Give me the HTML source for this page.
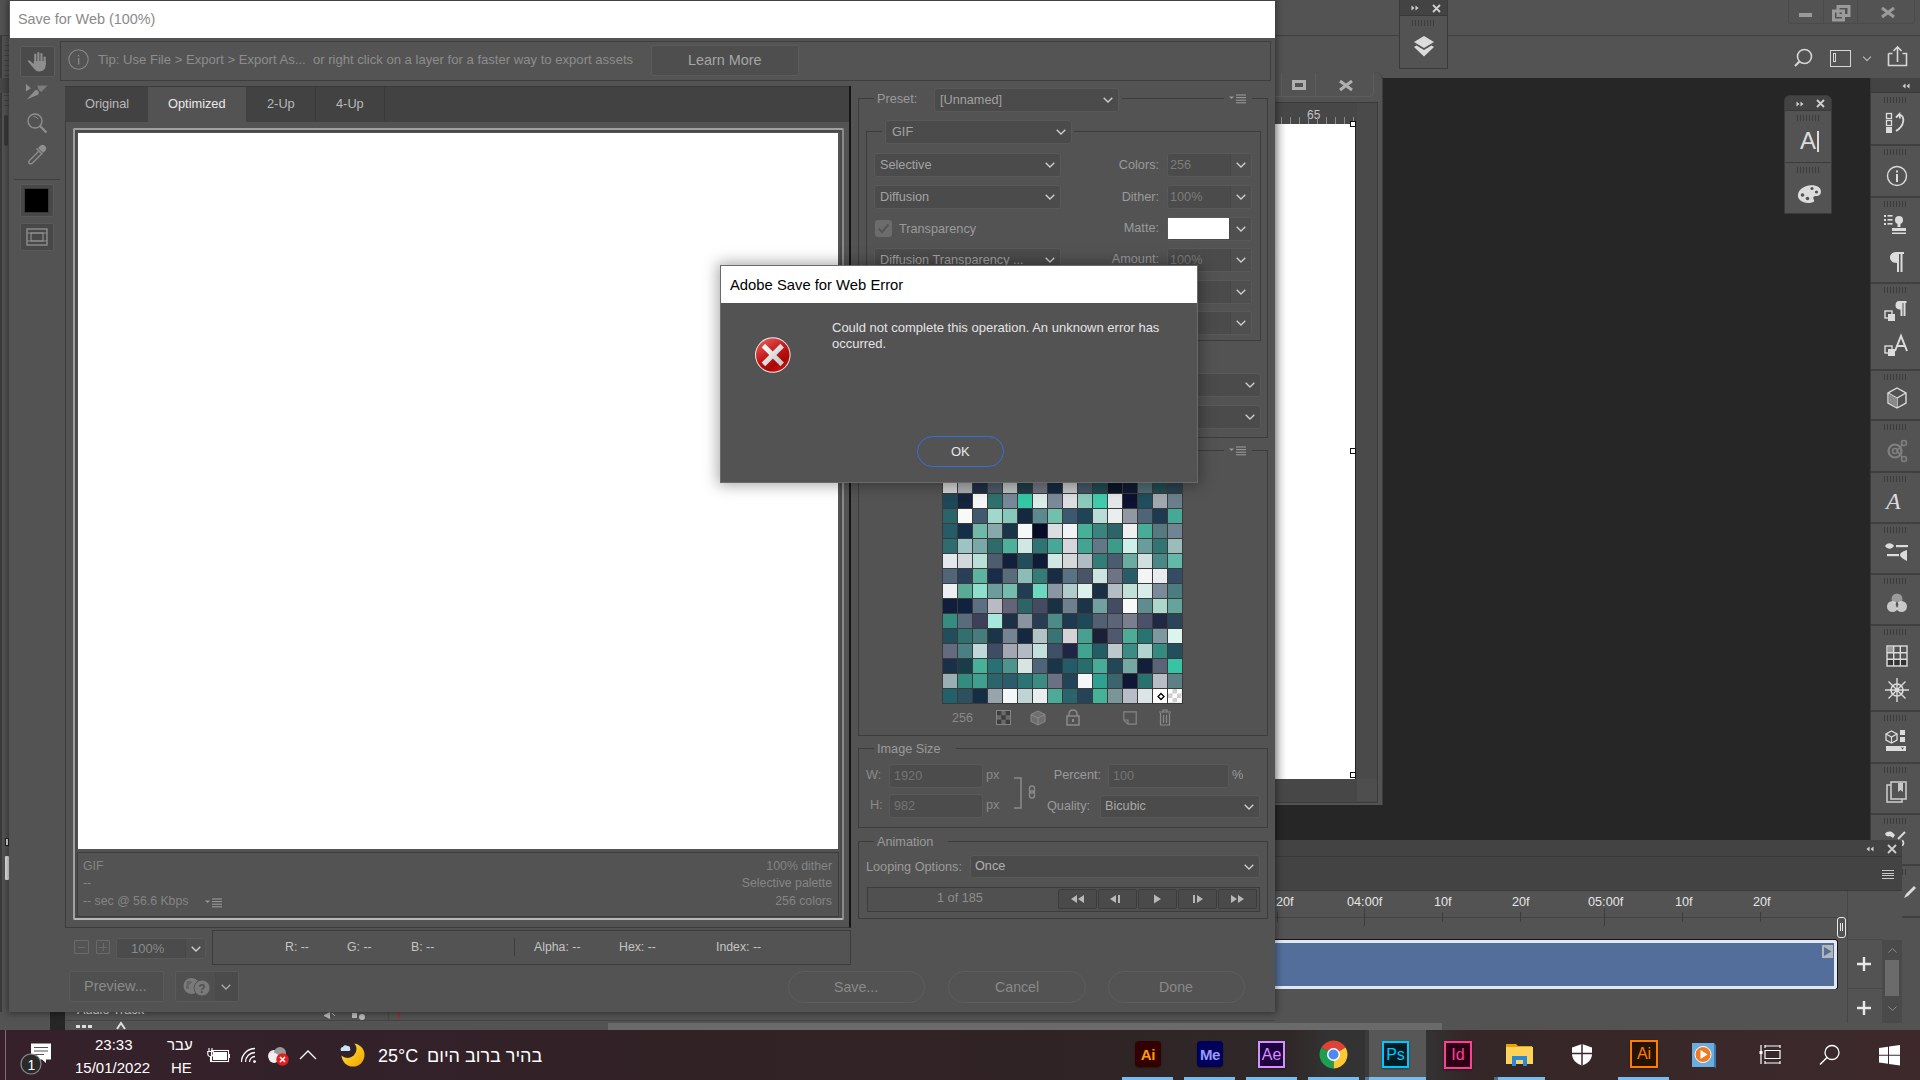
<!DOCTYPE html>
<html><head><meta charset="utf-8">
<style>
*{box-sizing:border-box;margin:0;padding:0}
html,body{width:1920px;height:1080px;overflow:hidden;background:#262626;font-family:"Liberation Sans",sans-serif;}
.a{position:absolute}
.t{position:absolute;white-space:nowrap;line-height:1}
.dd{position:absolute;background:#4b4b4b;border:1px solid #595959;border-radius:3px}
.chev{position:absolute;width:7px;height:7px;border-right:1.4px solid #cfcfcf;border-bottom:1.4px solid #cfcfcf;transform:rotate(45deg)}
.grip{position:absolute;height:6px;background:repeating-linear-gradient(90deg,#3c3c3c 0 1px,transparent 1px 3px)}
svg{position:absolute;overflow:visible}
</style></head>
<body>
<!-- ================= PHOTOSHOP BACKGROUND ================= -->
<div id="ps">
  <!-- top menu bar -->
  <div class="a" style="left:0;top:0;width:1920px;height:35px;background:#535353"></div>
  <div class="a" style="left:0;top:35px;width:1920px;height:1px;background:#3f3f3f"></div>
  <!-- options bar -->
  <div class="a" style="left:0;top:36px;width:1920px;height:42px;background:#535353"></div>
  <!-- window controls -->
  <div class="a" style="left:1788px;top:-3px;width:127px;height:27px;border:1px solid #4a4a4a;border-radius:3px"></div>
  <div class="a" style="left:1823px;top:0;width:1px;height:23px;background:#4a4a4a"></div>
  <div class="a" style="left:1857px;top:0;width:1px;height:23px;background:#4a4a4a"></div>
  <div class="a" style="left:1799px;top:13px;width:13px;height:4px;background:#9a9a9a"></div>
  <svg style="left:1832px;top:5px" width="19" height="16"><path d="M6 1.5h11v9h-11z M1.5 6h10v9h-10z" fill="none" stroke="#9a9a9a" stroke-width="3"/></svg>
  <svg style="left:1881px;top:7px" width="14" height="11"><path d="M1 1L13 10M13 1L1 10" stroke="#9a9a9a" stroke-width="3"/></svg>
  <!-- options bar icons -->
  <svg style="left:1794px;top:47px" width="22" height="22"><circle cx="10.5" cy="9.5" r="7" fill="none" stroke="#d6d6d6" stroke-width="1.6"/><path d="M5.5 14.5L1 19" stroke="#d6d6d6" stroke-width="2.2"/></svg>
  <div class="a" style="left:1830px;top:50px;width:21px;height:17px;border:1.6px solid #d6d6d6"></div>
  <div class="a" style="left:1833px;top:53px;width:3px;height:9px;border:1px solid #d6d6d6"></div>
  <div class="chev" style="left:1864px;top:54px;width:6px;height:6px;border-color:#c0c0c0;border-width:0 1px 1px 0"></div>
  <svg style="left:1887px;top:45px" width="22" height="22"><path d="M1.5 8.5v12h18v-12h-4 M5.5 8.5h-4" fill="none" stroke="#d6d6d6" stroke-width="1.6"/><path d="M10.5 17V2M6.5 6l4-4 4 4" fill="none" stroke="#d6d6d6" stroke-width="1.6"/></svg>
  <!-- left strip behind dialog -->
  <div class="a" style="left:0;top:36px;width:9px;height:994px;background:#535353"></div>
  <div class="a" style="left:0;top:36px;width:2px;height:994px;background:#3a3a3a"></div>
  <div class="a" style="left:4px;top:45px;width:5px;height:62px;background:repeating-linear-gradient(180deg,#444 0 1px,transparent 1px 5px)"></div>
  <div class="a" style="left:0;top:78px;width:9px;height:15px;background:#474747"></div>
  <div class="a" style="left:4px;top:115px;width:4px;height:31px;background:#3a3a3a;border-radius:2px"></div>
  <div class="a" style="left:5px;top:838px;width:4px;height:8px;border:1px solid #222;background:#ddd"></div>
  <div class="a" style="left:5px;top:856px;width:4px;height:24px;background:#e8e8e8;border-radius:1px"></div>

  <!-- Floating layers panel (top) -->
  <div class="a" style="left:1399px;top:0;width:49px;height:69px;background:#535353;border:1px solid #3a3a3a;border-top:none"></div>
  <div class="a" style="left:1400px;top:0;width:47px;height:16px;background:#434343;border-bottom:1px solid #383838"></div>
  <svg style="left:1410px;top:4px" width="10" height="8"><path d="M1.5 1.5L4.5 4L1.5 6.5Z M5.5 1.5L8.5 4L5.5 6.5Z" fill="#d0d0d0"/></svg>
  <svg style="left:1432px;top:4px" width="9" height="9"><path d="M1 1L8 8M8 1L1 8" stroke="#cfcfcf" stroke-width="1.8"/></svg>
  <div class="grip" style="left:1412px;top:20px;width:24px"></div>
  <svg style="left:1413px;top:35px" width="22" height="22"><path d="M11 1L21 7L11 13L1 7Z" fill="#dcdcdc"/><path d="M3.5 10.5L11 15L18.5 10.5L21 12L11 21.5L1 12Z" fill="#dcdcdc"/></svg>

  <!-- Document window -->
  <div class="a" style="left:1275px;top:72px;width:108px;height:733px;background:#535353;border-right:1px solid #3c3c3c;border-radius:0 8px 0 0"></div>
  <div class="a" style="left:1275px;top:73px;width:99px;height:24px;border:1px solid #5e5e5e;border-left:none;border-top:none;border-radius:0 0 5px 0"></div>
  <div class="a" style="left:1281px;top:73px;width:1px;height:23px;background:#5e5e5e"></div>
  <div class="a" style="left:1315px;top:73px;width:1px;height:23px;background:#5e5e5e"></div>
  <div class="a" style="left:1292px;top:80px;width:14px;height:10px;border:3px solid #b0b0b0"></div>
  <svg style="left:1339px;top:80px" width="14" height="11"><path d="M1 1L13 10M13 1L1 10" stroke="#b0b0b0" stroke-width="3"/></svg>
  <div class="a" style="left:1275px;top:102px;width:103px;height:701px;background:#4a4a4a;border:1px solid #3a3a3a;border-left:none"></div>
  <div class="a" style="left:1275px;top:103px;width:82px;height:21px;background:#474747"></div>
  <div class="t" style="left:1307px;top:109px;font-size:12px;color:#c4c4c4">65</div>
  <div class="a" style="left:1275px;top:117px;width:82px;height:7px;background:repeating-linear-gradient(90deg,transparent 0 6px,#8a8a8a 6px 7px,transparent 7px 9px)"></div>
  <div class="a" style="left:1275px;top:124px;width:81px;height:655px;background:linear-gradient(90deg,#d8d8d8 0,#ffffff 12px);border-right:1px solid #222"></div>
  <div class="a" style="left:1350px;top:121px;width:6px;height:6px;border:1px solid #111;background:#fff"></div>
  <div class="a" style="left:1350px;top:448px;width:6px;height:6px;border:1px solid #111;background:#fff"></div>
  <div class="a" style="left:1350px;top:772px;width:6px;height:6px;border:1px solid #111;background:#fff"></div>
  <div class="a" style="left:1275px;top:779px;width:82px;height:22px;background:#474747"></div>
  <div class="a" style="left:1357px;top:779px;width:20px;height:22px;background:#4e4e4e"></div>

  <!-- Right icon strip -->
  <div class="a" style="left:1870px;top:78px;width:50px;height:952px;background:#535353;border-left:1px solid #3a3a3a"></div>
  <div class="a" style="left:1871px;top:78px;width:49px;height:15px;background:#434343;border-bottom:1px solid #383838"></div>
  <svg style="left:1901px;top:82px" width="10" height="8"><path d="M4.5 1.5L1.5 4L4.5 6.5Z M8.5 1.5L5.5 4L8.5 6.5Z" fill="#d0d0d0"/></svg>
  <div id="rstrip">
<div class="a" style="left:1871px;top:144px;width:49px;height:2px;background:#404040"></div>
<div class="a" style="left:1871px;top:196px;width:49px;height:2px;background:#404040"></div>
<div class="a" style="left:1871px;top:282px;width:49px;height:2px;background:#404040"></div>
<div class="a" style="left:1871px;top:369px;width:49px;height:2px;background:#404040"></div>
<div class="a" style="left:1871px;top:419px;width:49px;height:2px;background:#404040"></div>
<div class="a" style="left:1871px;top:471px;width:49px;height:2px;background:#404040"></div>
<div class="a" style="left:1871px;top:522px;width:49px;height:2px;background:#404040"></div>
<div class="a" style="left:1871px;top:573px;width:49px;height:2px;background:#404040"></div>
<div class="a" style="left:1871px;top:624px;width:49px;height:2px;background:#404040"></div>
<div class="a" style="left:1871px;top:710px;width:49px;height:2px;background:#404040"></div>
<div class="a" style="left:1871px;top:762px;width:49px;height:2px;background:#404040"></div>
<div class="a" style="left:1871px;top:813px;width:49px;height:2px;background:#404040"></div>
<div class="a" style="left:1871px;top:864px;width:49px;height:2px;background:#404040"></div>
<div class="a" style="left:1871px;top:916px;width:49px;height:2px;background:#404040"></div>
<div class="grip" style="left:1884px;top:97px;width:24px"></div>
<div class="grip" style="left:1884px;top:149px;width:24px"></div>
<div class="grip" style="left:1884px;top:201px;width:24px"></div>
<div class="grip" style="left:1884px;top:287px;width:24px"></div>
<div class="grip" style="left:1884px;top:374px;width:24px"></div>
<div class="grip" style="left:1884px;top:424px;width:24px"></div>
<div class="grip" style="left:1884px;top:476px;width:24px"></div>
<div class="grip" style="left:1884px;top:527px;width:24px"></div>
<div class="grip" style="left:1884px;top:578px;width:24px"></div>
<div class="grip" style="left:1884px;top:629px;width:24px"></div>
<div class="grip" style="left:1884px;top:715px;width:24px"></div>
<div class="grip" style="left:1884px;top:767px;width:24px"></div>
<div class="grip" style="left:1884px;top:818px;width:24px"></div>
<div class="grip" style="left:1884px;top:869px;width:24px"></div>
<svg style="left:1885px;top:112px" width="22" height="22"><rect x="1.5" y="1.5" width="5" height="5" fill="none" stroke="#dcdcdc" stroke-width="1.3"/><rect x="1.5" y="8.5" width="5" height="5" fill="none" stroke="#dcdcdc" stroke-width="1.3"/><rect x="1" y="15" width="6" height="6" fill="#dcdcdc"/><path d="M11 5.5L14.5 2L15 6.5 M14.5 2.5C20 4 20 14 11 19" fill="none" stroke="#dcdcdc" stroke-width="1.8"/></svg>
<svg style="left:1886px;top:165px" width="22" height="22"><circle cx="11" cy="11" r="9.5" fill="none" stroke="#dcdcdc" stroke-width="1.4"/><rect x="10" y="9" width="2" height="8" fill="#dcdcdc"/><rect x="10" y="5.5" width="2" height="2" fill="#dcdcdc"/></svg>
<svg style="left:1884px;top:214px" width="24" height="22"><rect x="0" y="1" width="2" height="2" fill="#dcdcdc"/><rect x="0" y="5" width="2" height="2" fill="#dcdcdc"/><rect x="0" y="9" width="2" height="2" fill="#dcdcdc"/><rect x="3.5" y="1" width="5" height="1.6" fill="#dcdcdc"/><rect x="3.5" y="5" width="5" height="1.6" fill="#dcdcdc"/><rect x="3.5" y="9" width="5" height="1.6" fill="#dcdcdc"/><circle cx="15" cy="6" r="4" fill="#dcdcdc"/><rect x="13.5" y="8" width="3" height="5" fill="#dcdcdc"/><path d="M8 14h14v3H8z" fill="#dcdcdc"/><rect x="8" y="18.5" width="14" height="1.5" fill="#dcdcdc"/></svg>
<svg style="left:1888px;top:251px" width="18" height="22"><path d="M8 1h8v2h-1.5v18h-2V3h-1.5v18H9V12C4 12 2 9 2 6.5C2 3 5 1 8 1z" fill="#dcdcdc"/></svg>
<svg style="left:1884px;top:300px" width="24" height="24"><rect x="1" y="11" width="7" height="7" fill="none" stroke="#dcdcdc" stroke-width="1.4"/><rect x="4" y="14" width="7" height="7" fill="#dcdcdc"/><path d="M14.5 1h8v2h-1v13h-2V3h-1v13h-2V9.5C13 9.5 11.5 7.5 11.5 5.5C11.5 2.5 13 1 14.5 1z" fill="#dcdcdc"/></svg>
<svg style="left:1884px;top:335px" width="26" height="24"><rect x="1" y="11" width="7" height="7" fill="none" stroke="#dcdcdc" stroke-width="1.4"/><rect x="4" y="14" width="7" height="7" fill="#dcdcdc"/><path d="M11 16L17 1L23 16M13.5 11h7" fill="none" stroke="#dcdcdc" stroke-width="2"/></svg>
<svg style="left:1885px;top:386px" width="24" height="24"><path d="M12 2L21 7V17L12 22L3 17V7Z" fill="none" stroke="#dcdcdc" stroke-width="1.4"/><path d="M3 7L12 12L21 7M12 12V22" fill="none" stroke="#dcdcdc" stroke-width="1.4"/><path d="M3.7 7.7L12 12.3V21L3.7 16.6Z" fill="#8a8a8a"/></svg>
<svg style="left:1885px;top:439px" width="24" height="24"><circle cx="10" cy="12" r="6.5" fill="none" stroke="#808080" stroke-width="2.2"/><circle cx="10" cy="12" r="2.5" fill="none" stroke="#808080" stroke-width="1.6"/><circle cx="19" cy="4" r="2.5" fill="none" stroke="#808080" stroke-width="1.6"/><circle cx="19" cy="20" r="2.5" fill="none" stroke="#808080" stroke-width="1.6"/><path d="M12 12L17.5 5.5M12 12L17.5 18.5" stroke="#808080" stroke-width="1.6"/></svg>
<div class="t" style="left:1886px;top:489px;font-family:'Liberation Serif',serif;font-style:italic;font-size:24px;color:#dcdcdc">A</div>
<svg style="left:1884px;top:541px" width="26" height="22"><path d="M1 5C4 1 8 2 10 5C8 8 4 9 1 5z" fill="#dcdcdc"/><rect x="12" y="4" width="12" height="2.2" fill="#dcdcdc"/><rect x="3" y="13" width="12" height="2.2" fill="#dcdcdc"/><path d="M23 9C19 10 16 12 16 14C16 16 19 18 23 20z" fill="#dcdcdc"/></svg>
<svg style="left:1885px;top:592px" width="24" height="22"><circle cx="12" cy="7" r="5.5" fill="#9a9a9a"/><circle cx="7.5" cy="14.5" r="5.5" fill="#dcdcdc" fill-opacity="0.85"/><circle cx="16.5" cy="14.5" r="5.5" fill="#dcdcdc" fill-opacity="0.85"/><path d="M12 9.5C10.5 11 10 13 12 16C14 13 13.5 11 12 9.5z" fill="#555"/></svg>
<svg style="left:1886px;top:645px" width="22" height="22"><rect x="1" y="1" width="20" height="20" fill="none" stroke="#dcdcdc" stroke-width="1.4"/><path d="M7.7 1V21M14.3 1V21M1 7.7H21M1 14.3H21" stroke="#dcdcdc" stroke-width="1.4"/><rect x="2" y="2" width="5" height="5" fill="#9a9a9a"/><rect x="2" y="15" width="5" height="5" fill="#333"/><rect x="8.5" y="15" width="5" height="5" fill="#333"/><rect x="15" y="15" width="5" height="5" fill="#333"/></svg>
<svg style="left:1884px;top:677px" width="26" height="26"><circle cx="13" cy="13" r="6" fill="none" stroke="#dcdcdc" stroke-width="1.6"/><path d="M13 1V25M1 13H25M4.5 4.5L21.5 21.5M21.5 4.5L4.5 21.5" stroke="#dcdcdc" stroke-width="1.4"/><circle cx="13" cy="13" r="2" fill="#dcdcdc"/></svg>
<svg style="left:1885px;top:729px" width="24" height="24"><path d="M6.5 2L12 5V11L6.5 14L1 11V5Z" fill="none" stroke="#dcdcdc" stroke-width="1.3"/><path d="M1 5L6.5 8L12 5M6.5 8V14" fill="none" stroke="#dcdcdc" stroke-width="1.2"/><rect x="15" y="1" width="5" height="5" fill="#dcdcdc"/><rect x="15" y="8" width="5" height="5" fill="#dcdcdc"/><rect x="1" y="17" width="20" height="5" fill="#dcdcdc"/><path d="M16 18.5h3l-1.5 2z" fill="#535353"/></svg>
<svg style="left:1885px;top:780px" width="24" height="24"><rect x="2" y="5" width="15" height="17" fill="none" stroke="#c8c8c8" stroke-width="1.6"/><rect x="6" y="2" width="15" height="17" fill="#535353" stroke="#c8c8c8" stroke-width="1.6"/><path d="M13 3h5v9l-2.5-2l-2.5 2z" fill="#c8c8c8"/></svg>
<svg style="left:1884px;top:830px" width="24" height="20"><path d="M1 4C3 1 7 1 9 3L11 5L9 8L6 6C4 7 2 6 1 4z" fill="#dcdcdc"/><path d="M14 9L21 2" stroke="#dcdcdc" stroke-width="2"/><circle cx="17" cy="13" r="2.5" fill="none" stroke="#dcdcdc" stroke-width="1.6"/></svg>
</div>

  <!-- Floating char/color panel -->
  <div class="a" style="left:1784px;top:95px;width:48px;height:119px;background:#535353;border:1px solid #3a3a3a;border-radius:6px 6px 0 0"></div>
  <div class="a" style="left:1785px;top:96px;width:46px;height:15px;background:#434343;border-radius:5px 5px 0 0;border-bottom:1px solid #383838"></div>
  <svg style="left:1795px;top:100px" width="10" height="8"><path d="M1.5 1.5L4.5 4L1.5 6.5Z M5.5 1.5L8.5 4L5.5 6.5Z" fill="#d0d0d0"/></svg>
  <svg style="left:1816px;top:99px" width="9" height="9"><path d="M1 1L8 8M8 1L1 8" stroke="#cfcfcf" stroke-width="1.8"/></svg>
  <div class="grip" style="left:1797px;top:115px;width:24px"></div>
  <div class="t" style="left:1800px;top:129px;font-size:24px;color:#dcdcdc">A</div>
  <div class="a" style="left:1817px;top:131px;width:1.5px;height:21px;background:#dcdcdc"></div>
  <div class="a" style="left:1785px;top:162px;width:46px;height:1px;background:#3c3c3c"></div>
  <div class="grip" style="left:1797px;top:167px;width:24px"></div>
  <svg style="left:1797px;top:184px" width="26" height="20"><path d="M3 6C7 1 17 0 21.5 3C25 5.5 24.5 10 22 11.5C20 12.5 17.5 11 16.5 13C15.5 15 18 16 17 17.5C14 20 5 19.5 2 15C0 12 1 8.5 3 6Z" fill="#dcdcdc"/><circle cx="5.5" cy="11" r="1.8" fill="#535353"/><circle cx="10.5" cy="14.5" r="1.8" fill="#535353"/><circle cx="15" cy="4.5" r="1.6" fill="#535353"/><circle cx="19.5" cy="8" r="1.6" fill="#535353"/></svg>

  <!-- Timeline panel -->
  <div class="a" style="left:1275px;top:840px;width:627px;height:190px;background:#535353"></div>
  <div class="a" style="left:1275px;top:840px;width:627px;height:17px;background:#434343;border-bottom:1px solid #383838;border-radius:0 5px 0 0"></div>
  <svg style="left:1865px;top:845px" width="10" height="8"><path d="M4.5 1.5L1.5 4L4.5 6.5Z M8.5 1.5L5.5 4L8.5 6.5Z" fill="#d0d0d0"/></svg>
  <svg style="left:1887px;top:844px" width="10" height="10"><path d="M1 1L9 9M9 1L1 9" stroke="#cfcfcf" stroke-width="1.8"/></svg>
  <div class="a" style="left:1275px;top:857px;width:627px;height:34px;background:#434343;border-bottom:1px solid #3a3a3a"></div>
  <div class="a" style="left:1882px;top:870px;width:12px;height:10px;background:repeating-linear-gradient(180deg,#c8c8c8 0 1.2px,transparent 1.2px 2.6px)"></div>
  <div class="a" style="left:1275px;top:891px;width:572px;height:49px;background:#535353"></div>
  <div id="tlruler">
<div class="t" style="left:1276px;top:896px;font-size:12.7px;color:#e6e6e6">20f</div>
<div class="t" style="left:1347px;top:896px;font-size:12.7px;color:#e6e6e6">04:00f</div>
<div class="t" style="left:1434px;top:896px;font-size:12.7px;color:#e6e6e6">10f</div>
<div class="t" style="left:1512px;top:896px;font-size:12.7px;color:#e6e6e6">20f</div>
<div class="t" style="left:1588px;top:896px;font-size:12.7px;color:#e6e6e6">05:00f</div>
<div class="t" style="left:1675px;top:896px;font-size:12.7px;color:#e6e6e6">10f</div>
<div class="t" style="left:1753px;top:896px;font-size:12.7px;color:#e6e6e6">20f</div>
<div class="a" style="left:1275px;top:917px;width:565px;height:1px;background:#434343"></div>
<div class="a" style="left:1277px;top:912px;width:1px;height:10px;background:#3c3c3c"></div>
<div class="a" style="left:1364px;top:908px;width:1px;height:18px;background:#3c3c3c"></div>
<div class="a" style="left:1442px;top:912px;width:1px;height:10px;background:#3c3c3c"></div>
<div class="a" style="left:1520px;top:912px;width:1px;height:10px;background:#3c3c3c"></div>
<div class="a" style="left:1604px;top:908px;width:1px;height:18px;background:#3c3c3c"></div>
<div class="a" style="left:1682px;top:912px;width:1px;height:10px;background:#3c3c3c"></div>
<div class="a" style="left:1760px;top:912px;width:1px;height:10px;background:#3c3c3c"></div>
<div class="a" style="left:1837px;top:917px;width:9px;height:21px;border:1.5px solid #e8e8e8;border-radius:3px;background:#535353"></div>
<div class="a" style="left:1840px;top:923px;width:1px;height:8px;background:#e8e8e8"></div><div class="a" style="left:1842px;top:923px;width:1px;height:8px;background:#e8e8e8"></div>
</div>
  <div class="a" style="left:1275px;top:939px;width:563px;height:51px;background:#151515;border-radius:0 3px 3px 0"></div>
  <div class="a" style="left:1275px;top:940px;width:562px;height:49px;background:#536e9a;border:3px solid #e2e8f2;border-left:none;border-radius:0 3px 3px 0"></div>
  <svg style="left:1822px;top:945px" width="12" height="14"><rect x="0" y="0" width="11" height="13" fill="#b4b4b4"/><path d="M2 2L9.5 6.5L2 11Z" fill="#536e9a"/></svg>
  <div class="a" style="left:1275px;top:989px;width:572px;height:34px;background:#535353"></div>
  <div class="a" style="left:1847px;top:891px;width:35px;height:132px;background:#535353;border-left:1px solid #474747"></div>
  <div class="a" style="left:1848px;top:939px;width:34px;height:1px;background:#474747"></div>
  <div class="a" style="left:1848px;top:988px;width:34px;height:1px;background:#474747"></div>
  <svg style="left:1857px;top:957px" width="14" height="14"><path d="M7 0V14M0 7H14" stroke="#e8e8e8" stroke-width="2.4"/></svg>
  <svg style="left:1857px;top:1001px" width="14" height="14"><path d="M7 0V14M0 7H14" stroke="#e8e8e8" stroke-width="2.4"/></svg>
  <div class="a" style="left:1882px;top:940px;width:20px;height:83px;background:#4a4a4a"></div>
  <div class="a" style="left:1885px;top:960px;width:14px;height:36px;background:#6b6b6b"></div>
  <svg style="left:1888px;top:948px" width="9" height="5"><path d="M0.5 4.5L4.5 0.5L8.5 4.5" fill="none" stroke="#8a8a8a" stroke-width="1"/></svg>
  <svg style="left:1888px;top:1006px" width="9" height="5"><path d="M0.5 0.5L4.5 4.5L8.5 0.5" fill="none" stroke="#8a8a8a" stroke-width="1"/></svg>
  <div class="a" style="left:1275px;top:1023px;width:627px;height:7px;background:#535353"></div>

  <svg style="left:1902px;top:884px" width="16" height="16"><path d="M2 14L4 10L12 2L14 4L6 12Z" fill="#dcdcdc"/></svg>
  <!-- bottom behind dialog: timeline left part -->
  <div class="a" style="left:0;top:1012px;width:1275px;height:18px;background:#535353"></div>
  <div class="a" style="left:50px;top:1012px;width:15px;height:18px;background:#262626"></div>
  <div class="t" style="left:77px;top:1004px;font-size:12.7px;color:#e0e0e0">Audio Track</div>
  
  <div class="a" style="left:399px;top:1012px;width:1px;height:8px;background:#c02020"></div>
  <svg style="left:322px;top:1012px" width="60" height="8"><path d="M2 3L8 0V7L2 4Z" fill="#bbb"/><path d="M10 1L13 4" stroke="#bbb"/><rect x="30" y="1" width="5" height="5" fill="#bbb"/><circle cx="40" cy="5" r="3" fill="#bbb"/></svg>
  <div class="a" style="left:65px;top:1020px;width:1210px;height:1px;background:#444"></div>
  <div class="a" style="left:388px;top:1012px;width:1px;height:8px;background:#4a4a4a"></div>
  <div class="a" style="left:76px;top:1025px;width:18px;height:3px;background:repeating-linear-gradient(90deg,#ddd 0 4px,transparent 4px 6px)"></div>
  <svg style="left:116px;top:1022px" width="10" height="8"><path d="M1 7L5 1L9 7" fill="none" stroke="#ddd" stroke-width="2"/></svg>
  <div class="a" style="left:608px;top:1023px;width:834px;height:7px;background:#6a6a6a"></div>
</div>

<!-- ================= SAVE FOR WEB DIALOG ================= -->
<div id="sfw">
<div class="a" style="left:9px;top:0;width:1266px;height:1012px;background:#535353;border-top:1px solid #444;box-shadow:0 0 7px 1px rgba(0,0,0,0.45)"></div>
<div class="a" style="left:10px;top:1px;width:1265px;height:37px;background:#fff"></div>
<div class="t" style="left:18px;top:12px;font-size:14.4px;color:#8a8a8a">Save for Web (100%)</div>
<div class="a" style="left:20px;top:46px;width:35px;height:31px;background:#4a4a4a;border:1px solid #5c5c5c;border-radius:2px"></div>
<svg style="left:17px;top:44px" width="40" height="60"><g fill="#8e8e8e"><rect x="17.2" y="9.4" width="2.1" height="12" rx="1"/><rect x="20.3" y="8" width="2.1" height="13" rx="1"/><rect x="23.4" y="9" width="2.1" height="12" rx="1"/><rect x="26.6" y="12.5" width="2.1" height="9" rx="1"/><path d="M16.8 17H28.7V21C28.7 25 26 27.4 22.5 27.4C19.5 27.4 17.8 26 16.5 24L11 17.5C10.5 16.6 11.7 15.8 12.6 16.5L16.8 20Z"/></g></svg>
<svg style="left:17px;top:44px" width="40" height="60"><path d="M8.9 40L13.9 44.3L8.9 47.6Z" fill="#8e8e8e"/><path d="M20.5 41.5H30.6L24.3 48C22 47 20.5 45 20.5 41.5Z" fill="#7c7c7c"/><path d="M9.7 55.5L18.3 46.2C20 45.5 22 46.6 21.8 49.2C21.5 50.5 20.5 51.2 19 51.5Z" fill="#8e8e8e"/></svg>
<svg style="left:26px;top:112px" width="22" height="23"><circle cx="9" cy="9" r="7" fill="none" stroke="#8e8e8e" stroke-width="1.4"/><path d="M7.5 4.5C9.5 4.5 11 5.5 12 7" fill="none" stroke="#8e8e8e" stroke-width="1"/><path d="M14 14L20.5 20.5" stroke="#8e8e8e" stroke-width="2.2"/></svg>
<svg style="left:26px;top:143px" width="22" height="23"><path d="M14.5 2.5C15.5 1.5 17.5 1.5 18.5 2.5L19.5 3.5C20.5 4.5 20.5 6.5 19.5 7.5L17 10L12 5Z" fill="#8e8e8e"/><path d="M10.5 5.5L16.5 11.5" stroke="#8e8e8e" stroke-width="1.6"/><path d="M12.5 8.5L3.5 17.5C2.5 18.5 2.5 20 3.5 20.5C4.5 21 5.5 21 6.5 20L15 11.5" fill="none" stroke="#8e8e8e" stroke-width="1.4"/></svg>
<div class="a" style="left:14px;top:179px;width:46px;height:1px;background:#3e3e3e"></div>
<div class="a" style="left:20px;top:184px;width:34px;height:33px;background:#484848;border:1px solid #5a5a5a;border-radius:2px"></div>
<div class="a" style="left:24px;top:188px;width:25px;height:25px;background:#000;border:1px solid #3a3a3a"></div>
<div class="a" style="left:20px;top:223px;width:34px;height:28px;background:#484848;border:1px solid #5a5a5a;border-radius:2px"></div>
<svg style="left:26px;top:228px" width="22" height="18"><rect x="1" y="1" width="20" height="16" fill="none" stroke="#8e8e8e" stroke-width="1.4"/><rect x="5" y="5" width="12" height="8" fill="none" stroke="#8e8e8e" stroke-width="1.2"/><path d="M1 5H21M1 13H21" stroke="#8e8e8e" stroke-width="1"/></svg>
<div class="a" style="left:60px;top:41px;width:1211px;height:40px;border:1px solid #3e3e3e;background:#545454"></div>
<svg style="left:68px;top:49px" width="22" height="22"><circle cx="10.5" cy="10.5" r="9.7" fill="none" stroke="#888" stroke-width="1.1"/><rect x="10" y="9" width="1.3" height="6.5" fill="#888"/><rect x="10" y="6" width="1.3" height="1.5" fill="#888"/></svg>
<div class="t" style="left:98px;top:53px;font-size:13.1px;color:#8d8d8d;word-spacing:0px">Tip: Use File &gt; Export &gt; Export As...&nbsp;&nbsp;or right click on a layer for a faster way to export assets</div>
<div class="a" style="left:651px;top:45px;width:148px;height:31px;background:#4e4e4e;border:1px solid #5b5b5b;border-radius:2px"></div>
<div class="t" style="left:688px;top:53px;font-size:14.4px;color:#a6a6a6">Learn More</div>
<div class="a" style="left:65px;top:86px;width:786px;height:36px;background:#424242;border-top:1px solid #3a3a3a"></div>
<div class="a" style="left:148px;top:87px;width:98px;height:35px;background:#535353"></div>
<div class="a" style="left:315px;top:87px;width:1px;height:34px;background:#393939"></div>
<div class="a" style="left:384px;top:87px;width:1px;height:34px;background:#393939"></div>
<div class="t" style="left:85px;top:98px;font-size:12.8px;color:#b9b9b9">Original</div>
<div class="t" style="left:168px;top:98px;font-size:12.8px;color:#eaeaea">Optimized</div>
<div class="t" style="left:267px;top:98px;font-size:12.8px;color:#b9b9b9">2-Up</div>
<div class="t" style="left:336px;top:98px;font-size:12.8px;color:#b9b9b9">4-Up</div>
<div class="a" style="left:65px;top:121px;width:786px;height:807px;border-left:1px solid #3c3c3c;border-bottom:1px solid #3c3c3c;border-right:2px solid #151515"></div>
<div class="a" style="left:849px;top:86px;width:2px;height:36px;background:#151515"></div>
<div class="a" style="left:73px;top:128px;width:771px;height:792px;border:2px solid #a0a0a0;border-right-color:#8a8a8a;border-bottom-color:#b8b8b8;border-radius:2px"></div>
<div class="a" style="left:75px;top:130px;width:767px;height:788px;border:2px solid #4a4a4a"></div>
<div class="a" style="left:78px;top:133px;width:760px;height:716px;background:#fff"></div>
<div class="a" style="left:77px;top:852px;width:762px;height:65px;border:1px solid #3c3c3c"></div>
<div class="t" style="left:83px;top:860px;font-size:12.3px;color:#858585">GIF</div>
<div class="t" style="left:83px;top:877px;font-size:12.3px;color:#858585">--</div>
<div class="t" style="left:83px;top:895px;font-size:12.3px;color:#858585">-- sec @ 56.6 Kbps</div>
<svg style="left:205px;top:898px" width="18" height="10"><path d="M0 2.5h5l-2.5 2.5z" fill="#9a9a9a"/><path d="M7 1h10M7 3.6h10M7 6.2h10M7 8.8h10" stroke="#a8a8a8" stroke-width="0.9"/></svg>
<div class="t" style="right:1088px;top:860px;font-size:12.3px;color:#858585">100% dither</div>
<div class="t" style="right:1088px;top:877px;font-size:12.3px;color:#858585">Selective palette</div>
<div class="t" style="right:1088px;top:895px;font-size:12.3px;color:#858585">256 colors</div>
<div class="a" style="left:74px;top:940px;width:15px;height:14px;border:1px solid #6a6a6a;border-radius:1px"></div>
<div class="a" style="left:78px;top:947px;width:7px;height:1px;background:#6a6a6a"></div>
<div class="a" style="left:96px;top:940px;width:14px;height:14px;border:1px solid #6a6a6a;border-radius:1px"></div>
<div class="a" style="left:99px;top:947px;width:8px;height:1px;background:#6a6a6a"></div>
<div class="a" style="left:103px;top:943px;width:1px;height:8px;background:#6a6a6a"></div>
<div class="dd" style="left:116px;top:938px;width:90px;height:21px;background:#4b4b4b"></div>
<div class="a" style="left:185px;top:939px;width:1px;height:19px;background:#474747"></div>
<div class="a" style="left:186px;top:939px;width:19px;height:19px;background:#4f4f4f"></div>
<svg style="left:190.5px;top:945.5px" width="10" height="6"><path d="M0.7 0.7L5 5L9.3 0.7" fill="none" stroke="#cfcfcf" stroke-width="1.3"/></svg>
<div class="t" style="left:131px;top:942px;font-size:13px;color:#8a8a8a">100%</div>
<div class="a" style="left:212px;top:930px;width:639px;height:35px;border:1px solid #3c3c3c"></div>
<div class="t" style="left:285px;top:941px;font-size:12.3px;color:#c4c4c4">R: --</div>
<div class="t" style="left:347px;top:941px;font-size:12.3px;color:#c4c4c4">G: --</div>
<div class="t" style="left:411px;top:941px;font-size:12.3px;color:#c4c4c4">B: --</div>
<div class="t" style="left:534px;top:941px;font-size:12.3px;color:#c4c4c4">Alpha: --</div>
<div class="t" style="left:619px;top:941px;font-size:12.3px;color:#c4c4c4">Hex: --</div>
<div class="t" style="left:716px;top:941px;font-size:12.3px;color:#c4c4c4">Index: --</div>
<div class="a" style="left:514px;top:938px;width:1px;height:18px;background:#3e3e3e"></div>
<div class="a" style="left:69px;top:971px;width:95px;height:31px;background:#4f4f4f;border:1px solid #5a5a5a;border-radius:2px"></div>
<div class="t" style="left:84px;top:979px;font-size:14.5px;color:#8a8a8a">Preview...</div>
<div class="a" style="left:175px;top:971px;width:64px;height:31px;background:#4f4f4f;border:1px solid #5a5a5a;border-radius:2px"></div>
<div class="a" style="left:215px;top:972px;width:1px;height:29px;background:#4a4a4a"></div>
<div class="a" style="left:216px;top:972px;width:22px;height:29px;background:#4b4b4b"></div>
<svg style="left:183px;top:976px" width="28" height="22"><circle cx="8.5" cy="10" r="8" fill="#7a7a7a"/><path d="M4 5C6 6 7 4 9 6C8 8 5 8 6 11C7 13 4 14 3 12" fill="#555" opacity="0.6"/><circle cx="19" cy="12" r="8" fill="#7a7a7a" stroke="#535353" stroke-width="1"/><text x="15.3" y="17" font-family="Liberation Sans" font-size="12" font-weight="bold" fill="#505050">?</text></svg>
<svg style="left:221px;top:984px" width="10" height="6"><path d="M0.7 0.7L5 5L9.3 0.7" fill="none" stroke="#aaa" stroke-width="1.3"/></svg>
<div class="a" style="left:788px;top:971px;width:137px;height:32px;border:1px solid #5d5d5d;border-radius:16px"></div>
<div class="t" style="left:834px;top:980px;font-size:14.2px;color:#8a8a8a">Save...</div>
<div class="a" style="left:948px;top:971px;width:138px;height:32px;border:1px solid #5d5d5d;border-radius:16px"></div>
<div class="t" style="left:995px;top:980px;font-size:14.2px;color:#8a8a8a">Cancel</div>
<div class="a" style="left:1108px;top:971px;width:137px;height:32px;border:1px solid #5d5d5d;border-radius:16px"></div>
<div class="t" style="left:1159px;top:980px;font-size:14.2px;color:#8a8a8a">Done</div>
<div class="a" style="left:858px;top:98px;width:16px;height:1px;background:#3c3c3c"></div>
<div class="a" style="left:858px;top:98px;width:1px;height:339px;background:#3c3c3c"></div>
<div class="t" style="left:877px;top:93px;font-size:12.7px;color:#9a9a9a">Preset:</div>
<div class="dd" style="left:934px;top:88px;width:185px;height:24px"></div>
<div class="t" style="left:940px;top:94px;font-size:12.7px;color:#a0a0a0">[Unnamed]</div>
<svg style="left:1103px;top:97.0px" width="10" height="6"><path d="M0.7 0.7L5 5L9.3 0.7" fill="none" stroke="#cfcfcf" stroke-width="1.3"/></svg>
<div class="a" style="left:1122px;top:98px;width:102px;height:1px;background:#3c3c3c"></div>
<svg style="left:1229px;top:94px" width="18" height="10"><path d="M0 2.5h5l-2.5 2.5z" fill="#9a9a9a"/><path d="M7 1h10M7 3.6h10M7 6.2h10M7 8.8h10" stroke="#a8a8a8" stroke-width="0.9"/></svg>
<div class="a" style="left:1252px;top:98px;width:16px;height:1px;background:#3c3c3c"></div>
<div class="a" style="left:1267px;top:98px;width:1px;height:339px;background:#3c3c3c"></div>
<div class="a" style="left:858px;top:437px;width:410px;height:1px;background:#3c3c3c"></div>
<div class="a" style="left:866px;top:131px;width:16px;height:1px;background:#3c3c3c"></div>
<div class="a" style="left:866px;top:131px;width:1px;height:209px;background:#3c3c3c"></div>
<div class="dd" style="left:885px;top:120px;width:187px;height:24px"></div>
<div class="t" style="left:892px;top:126px;font-size:12.7px;color:#a3a3a3">GIF</div>
<svg style="left:1056px;top:129.0px" width="10" height="6"><path d="M0.7 0.7L5 5L9.3 0.7" fill="none" stroke="#cfcfcf" stroke-width="1.3"/></svg>
<div class="a" style="left:1074px;top:131px;width:187px;height:1px;background:#3c3c3c"></div>
<div class="a" style="left:1260px;top:131px;width:1px;height:209px;background:#3c3c3c"></div>
<div class="a" style="left:866px;top:340px;width:395px;height:1px;background:#3c3c3c"></div>
<div class="dd" style="left:874px;top:153px;width:187px;height:24px"></div>
<div class="t" style="left:880px;top:159px;font-size:12.7px;color:#a3a3a3">Selective</div>
<svg style="left:1045px;top:162.0px" width="10" height="6"><path d="M0.7 0.7L5 5L9.3 0.7" fill="none" stroke="#cfcfcf" stroke-width="1.3"/></svg>
<div class="dd" style="left:874px;top:185px;width:187px;height:24px"></div>
<div class="t" style="left:880px;top:191px;font-size:12.7px;color:#a3a3a3">Diffusion</div>
<svg style="left:1045px;top:194.0px" width="10" height="6"><path d="M0.7 0.7L5 5L9.3 0.7" fill="none" stroke="#cfcfcf" stroke-width="1.3"/></svg>
<div class="a" style="left:875px;top:220px;width:17px;height:17px;background:#6c6c6c;border-radius:3px"></div>
<svg style="left:877px;top:223px" width="13" height="11"><path d="M1.5 5.5L5 9L11.5 1.5" fill="none" stroke="#555" stroke-width="2"/></svg>
<div class="t" style="left:899px;top:223px;font-size:12.7px;color:#9a9a9a">Transparency</div>
<div class="dd" style="left:874px;top:248px;width:187px;height:24px"></div>
<div class="t" style="left:880px;top:254px;font-size:12.7px;color:#a3a3a3">Diffusion Transparency ...</div>
<svg style="left:1045px;top:257.0px" width="10" height="6"><path d="M0.7 0.7L5 5L9.3 0.7" fill="none" stroke="#cfcfcf" stroke-width="1.3"/></svg>
<div class="t" style="right:761px;top:159px;font-size:12.7px;color:#9a9a9a">Colors:</div>
<div class="dd" style="left:1167px;top:153px;width:85px;height:24px;background:#4b4b4b"></div>
<div class="a" style="left:1230px;top:154px;width:1px;height:22px;background:#474747"></div>
<div class="a" style="left:1231px;top:154px;width:20px;height:22px;background:#4f4f4f"></div>
<div class="t" style="left:1170px;top:159px;font-size:12.7px;color:#7c7c7c">256</div>
<svg style="left:1236.0px;top:162.0px" width="10" height="6"><path d="M0.7 0.7L5 5L9.3 0.7" fill="none" stroke="#cfcfcf" stroke-width="1.3"/></svg>
<div class="t" style="right:761px;top:191px;font-size:12.7px;color:#9a9a9a">Dither:</div>
<div class="dd" style="left:1167px;top:185px;width:85px;height:24px;background:#4b4b4b"></div>
<div class="a" style="left:1230px;top:186px;width:1px;height:22px;background:#474747"></div>
<div class="a" style="left:1231px;top:186px;width:20px;height:22px;background:#4f4f4f"></div>
<div class="t" style="left:1170px;top:191px;font-size:12.7px;color:#7c7c7c">100%</div>
<svg style="left:1236.0px;top:194.0px" width="10" height="6"><path d="M0.7 0.7L5 5L9.3 0.7" fill="none" stroke="#cfcfcf" stroke-width="1.3"/></svg>
<div class="t" style="right:761px;top:222px;font-size:12.7px;color:#9a9a9a">Matte:</div>
<div class="dd" style="left:1167px;top:217px;width:85px;height:24px;background:#4b4b4b"></div>
<div class="a" style="left:1229px;top:218px;width:1px;height:22px;background:#474747"></div>
<div class="a" style="left:1230px;top:218px;width:21px;height:22px;background:#4f4f4f"></div>
<svg style="left:1235.5px;top:226.0px" width="10" height="6"><path d="M0.7 0.7L5 5L9.3 0.7" fill="none" stroke="#cfcfcf" stroke-width="1.3"/></svg>
<div class="a" style="left:1168px;top:218px;width:61px;height:21px;background:#fff"></div>
<div class="t" style="right:761px;top:253px;font-size:12.7px;color:#9a9a9a">Amount:</div>
<div class="dd" style="left:1167px;top:248px;width:85px;height:24px;background:#4b4b4b"></div>
<div class="a" style="left:1230px;top:249px;width:1px;height:22px;background:#474747"></div>
<div class="a" style="left:1231px;top:249px;width:20px;height:22px;background:#4f4f4f"></div>
<div class="t" style="left:1170px;top:254px;font-size:12.7px;color:#7c7c7c">100%</div>
<svg style="left:1236.0px;top:257.0px" width="10" height="6"><path d="M0.7 0.7L5 5L9.3 0.7" fill="none" stroke="#cfcfcf" stroke-width="1.3"/></svg>
<div class="dd" style="left:1167px;top:280px;width:85px;height:24px;background:#4b4b4b"></div>
<div class="a" style="left:1230px;top:281px;width:1px;height:22px;background:#474747"></div>
<div class="a" style="left:1231px;top:281px;width:20px;height:22px;background:#4f4f4f"></div>
<svg style="left:1236.0px;top:289.0px" width="10" height="6"><path d="M0.7 0.7L5 5L9.3 0.7" fill="none" stroke="#cfcfcf" stroke-width="1.3"/></svg>
<div class="dd" style="left:1167px;top:311px;width:85px;height:24px;background:#4b4b4b"></div>
<div class="a" style="left:1230px;top:312px;width:1px;height:22px;background:#474747"></div>
<div class="a" style="left:1231px;top:312px;width:20px;height:22px;background:#4f4f4f"></div>
<svg style="left:1236.0px;top:320.0px" width="10" height="6"><path d="M0.7 0.7L5 5L9.3 0.7" fill="none" stroke="#cfcfcf" stroke-width="1.3"/></svg>
<div class="dd" style="left:874px;top:373px;width:387px;height:24px"></div>
<svg style="left:1245px;top:382.0px" width="10" height="6"><path d="M0.7 0.7L5 5L9.3 0.7" fill="none" stroke="#cfcfcf" stroke-width="1.3"/></svg>
<div class="dd" style="left:874px;top:405px;width:387px;height:24px"></div>
<svg style="left:1245px;top:414.0px" width="10" height="6"><path d="M0.7 0.7L5 5L9.3 0.7" fill="none" stroke="#cfcfcf" stroke-width="1.3"/></svg>
<div class="a" style="left:858px;top:450px;width:366px;height:1px;background:#3c3c3c"></div>
<svg style="left:1229px;top:446px" width="18" height="10"><path d="M0 2.5h5l-2.5 2.5z" fill="#9a9a9a"/><path d="M7 1h10M7 3.6h10M7 6.2h10M7 8.8h10" stroke="#a8a8a8" stroke-width="0.9"/></svg>
<div class="a" style="left:1252px;top:450px;width:16px;height:1px;background:#3c3c3c"></div>
<div class="a" style="left:858px;top:450px;width:1px;height:285px;background:#3c3c3c"></div>
<div class="a" style="left:1267px;top:450px;width:1px;height:285px;background:#3c3c3c"></div>
<div class="a" style="left:858px;top:735px;width:410px;height:1px;background:#3c3c3c"></div>
<div id="ctable">
<div class="a" style="left:942px;top:463px;width:241px;height:241px;background:#3a3a3a"></div>
<div class="a" style="left:943px;top:464px;width:14px;height:14px;background:#3a5060"></div>
<div class="a" style="left:958px;top:464px;width:14px;height:14px;background:#1e3a48"></div>
<div class="a" style="left:973px;top:464px;width:14px;height:14px;background:#c8d0d0"></div>
<div class="a" style="left:988px;top:464px;width:14px;height:14px;background:#2e6870"></div>
<div class="a" style="left:1003px;top:464px;width:14px;height:14px;background:#88a0a8"></div>
<div class="a" style="left:1018px;top:464px;width:14px;height:14px;background:#14283c"></div>
<div class="a" style="left:1033px;top:464px;width:14px;height:14px;background:#a0b0b8"></div>
<div class="a" style="left:1048px;top:464px;width:14px;height:14px;background:#2a6a6a"></div>
<div class="a" style="left:1063px;top:464px;width:14px;height:14px;background:#d8dce0"></div>
<div class="a" style="left:1078px;top:464px;width:14px;height:14px;background:#506070"></div>
<div class="a" style="left:1093px;top:464px;width:14px;height:14px;background:#1e4050"></div>
<div class="a" style="left:1108px;top:464px;width:14px;height:14px;background:#e0e4e4"></div>
<div class="a" style="left:1123px;top:464px;width:14px;height:14px;background:#283a50"></div>
<div class="a" style="left:1138px;top:464px;width:14px;height:14px;background:#4aa090"></div>
<div class="a" style="left:1153px;top:464px;width:14px;height:14px;background:#7a8a98"></div>
<div class="a" style="left:1168px;top:464px;width:14px;height:14px;background:#18304a"></div>
<div class="a" style="left:943px;top:479px;width:14px;height:14px;background:#d0d2d2"></div>
<div class="a" style="left:958px;top:479px;width:14px;height:14px;background:#a8acb2"></div>
<div class="a" style="left:973px;top:479px;width:14px;height:14px;background:#1e2e42"></div>
<div class="a" style="left:988px;top:479px;width:14px;height:14px;background:#4a5a68"></div>
<div class="a" style="left:1003px;top:479px;width:14px;height:14px;background:#b8c0c0"></div>
<div class="a" style="left:1018px;top:479px;width:14px;height:14px;background:#1e3c48"></div>
<div class="a" style="left:1033px;top:479px;width:14px;height:14px;background:#6e7280"></div>
<div class="a" style="left:1048px;top:479px;width:14px;height:14px;background:#142a40"></div>
<div class="a" style="left:1063px;top:479px;width:14px;height:14px;background:#c4c6c8"></div>
<div class="a" style="left:1078px;top:479px;width:14px;height:14px;background:#445464"></div>
<div class="a" style="left:1093px;top:479px;width:14px;height:14px;background:#1e4a50"></div>
<div class="a" style="left:1108px;top:479px;width:14px;height:14px;background:#0c1428"></div>
<div class="a" style="left:1123px;top:479px;width:14px;height:14px;background:#101a30"></div>
<div class="a" style="left:1138px;top:479px;width:14px;height:14px;background:#4e6a70"></div>
<div class="a" style="left:1153px;top:479px;width:14px;height:14px;background:#1e4a50"></div>
<div class="a" style="left:1168px;top:479px;width:14px;height:14px;background:#2a4050"></div>
<div class="a" style="left:943px;top:494px;width:14px;height:14px;background:#1e4858"></div>
<div class="a" style="left:958px;top:494px;width:14px;height:14px;background:#14243c"></div>
<div class="a" style="left:973px;top:494px;width:14px;height:14px;background:#f4f6f6"></div>
<div class="a" style="left:988px;top:494px;width:14px;height:14px;background:#2e706c"></div>
<div class="a" style="left:1003px;top:494px;width:14px;height:14px;background:#76889a"></div>
<div class="a" style="left:1018px;top:494px;width:14px;height:14px;background:#34c8a4"></div>
<div class="a" style="left:1033px;top:494px;width:14px;height:14px;background:#dcece8"></div>
<div class="a" style="left:1048px;top:494px;width:14px;height:14px;background:#7a8a98"></div>
<div class="a" style="left:1063px;top:494px;width:14px;height:14px;background:#dcdedf"></div>
<div class="a" style="left:1078px;top:494px;width:14px;height:14px;background:#8ccabc"></div>
<div class="a" style="left:1093px;top:494px;width:14px;height:14px;background:#40ccac"></div>
<div class="a" style="left:1108px;top:494px;width:14px;height:14px;background:#e4e6e8"></div>
<div class="a" style="left:1123px;top:494px;width:14px;height:14px;background:#0c1230"></div>
<div class="a" style="left:1138px;top:494px;width:14px;height:14px;background:#204e5c"></div>
<div class="a" style="left:1153px;top:494px;width:14px;height:14px;background:#a0a8b0"></div>
<div class="a" style="left:1168px;top:494px;width:14px;height:14px;background:#6a7e8c"></div>
<div class="a" style="left:943px;top:509px;width:14px;height:14px;background:#2a6468"></div>
<div class="a" style="left:958px;top:509px;width:14px;height:14px;background:#f8faf8"></div>
<div class="a" style="left:973px;top:509px;width:14px;height:14px;background:#405870"></div>
<div class="a" style="left:988px;top:509px;width:14px;height:14px;background:#a0d8cc"></div>
<div class="a" style="left:1003px;top:509px;width:14px;height:14px;background:#88c8bc"></div>
<div class="a" style="left:1018px;top:509px;width:14px;height:14px;background:#142840"></div>
<div class="a" style="left:1033px;top:509px;width:14px;height:14px;background:#5a8a90"></div>
<div class="a" style="left:1048px;top:509px;width:14px;height:14px;background:#70c0ac"></div>
<div class="a" style="left:1063px;top:509px;width:14px;height:14px;background:#3c5870"></div>
<div class="a" style="left:1078px;top:509px;width:14px;height:14px;background:#1e4458"></div>
<div class="a" style="left:1093px;top:509px;width:14px;height:14px;background:#b8dcd8"></div>
<div class="a" style="left:1108px;top:509px;width:14px;height:14px;background:#eaeeee"></div>
<div class="a" style="left:1123px;top:509px;width:14px;height:14px;background:#9098a4"></div>
<div class="a" style="left:1138px;top:509px;width:14px;height:14px;background:#4e6478"></div>
<div class="a" style="left:1153px;top:509px;width:14px;height:14px;background:#1e3a50"></div>
<div class="a" style="left:1168px;top:509px;width:14px;height:14px;background:#48a898"></div>
<div class="a" style="left:943px;top:524px;width:14px;height:14px;background:#265c68"></div>
<div class="a" style="left:958px;top:524px;width:14px;height:14px;background:#162e48"></div>
<div class="a" style="left:973px;top:524px;width:14px;height:14px;background:#70b8a8"></div>
<div class="a" style="left:988px;top:524px;width:14px;height:14px;background:#88a8ac"></div>
<div class="a" style="left:1003px;top:524px;width:14px;height:14px;background:#1a3448"></div>
<div class="a" style="left:1018px;top:524px;width:14px;height:14px;background:#f4f8f8"></div>
<div class="a" style="left:1033px;top:524px;width:14px;height:14px;background:#080c28"></div>
<div class="a" style="left:1048px;top:524px;width:14px;height:14px;background:#dcdde2"></div>
<div class="a" style="left:1063px;top:524px;width:14px;height:14px;background:#f0f4f4"></div>
<div class="a" style="left:1078px;top:524px;width:14px;height:14px;background:#48b098"></div>
<div class="a" style="left:1093px;top:524px;width:14px;height:14px;background:#3a8480"></div>
<div class="a" style="left:1108px;top:524px;width:14px;height:14px;background:#2c6468"></div>
<div class="a" style="left:1123px;top:524px;width:14px;height:14px;background:#f0f0f2"></div>
<div class="a" style="left:1138px;top:524px;width:14px;height:14px;background:#48ac98"></div>
<div class="a" style="left:1153px;top:524px;width:14px;height:14px;background:#56787e"></div>
<div class="a" style="left:1168px;top:524px;width:14px;height:14px;background:#708494"></div>
<div class="a" style="left:943px;top:539px;width:14px;height:14px;background:#2e6c70"></div>
<div class="a" style="left:958px;top:539px;width:14px;height:14px;background:#9cc4c4"></div>
<div class="a" style="left:973px;top:539px;width:14px;height:14px;background:#78a8a8"></div>
<div class="a" style="left:988px;top:539px;width:14px;height:14px;background:#2e6c6c"></div>
<div class="a" style="left:1003px;top:539px;width:14px;height:14px;background:#4cb09c"></div>
<div class="a" style="left:1018px;top:539px;width:14px;height:14px;background:#d0e8e4"></div>
<div class="a" style="left:1033px;top:539px;width:14px;height:14px;background:#2e7474"></div>
<div class="a" style="left:1048px;top:539px;width:14px;height:14px;background:#48a898"></div>
<div class="a" style="left:1063px;top:539px;width:14px;height:14px;background:#d4d8dc"></div>
<div class="a" style="left:1078px;top:539px;width:14px;height:14px;background:#44a494"></div>
<div class="a" style="left:1093px;top:539px;width:14px;height:14px;background:#607888"></div>
<div class="a" style="left:1108px;top:539px;width:14px;height:14px;background:#3c9c8c"></div>
<div class="a" style="left:1123px;top:539px;width:14px;height:14px;background:#cef0ea"></div>
<div class="a" style="left:1138px;top:539px;width:14px;height:14px;background:#6a9c9c"></div>
<div class="a" style="left:1153px;top:539px;width:14px;height:14px;background:#327474"></div>
<div class="a" style="left:1168px;top:539px;width:14px;height:14px;background:#9cbcbc"></div>
<div class="a" style="left:943px;top:554px;width:14px;height:14px;background:#e4e8ec"></div>
<div class="a" style="left:958px;top:554px;width:14px;height:14px;background:#d0d8dc"></div>
<div class="a" style="left:973px;top:554px;width:14px;height:14px;background:#b8e0d8"></div>
<div class="a" style="left:988px;top:554px;width:14px;height:14px;background:#4e5c70"></div>
<div class="a" style="left:1003px;top:554px;width:14px;height:14px;background:#12203c"></div>
<div class="a" style="left:1018px;top:554px;width:14px;height:14px;background:#224e5c"></div>
<div class="a" style="left:1033px;top:554px;width:14px;height:14px;background:#0e1c38"></div>
<div class="a" style="left:1048px;top:554px;width:14px;height:14px;background:#d0e8e4"></div>
<div class="a" style="left:1063px;top:554px;width:14px;height:14px;background:#d4dadc"></div>
<div class="a" style="left:1078px;top:554px;width:14px;height:14px;background:#b0bcc4"></div>
<div class="a" style="left:1093px;top:554px;width:14px;height:14px;background:#347c78"></div>
<div class="a" style="left:1108px;top:554px;width:14px;height:14px;background:#4a5c70"></div>
<div class="a" style="left:1123px;top:554px;width:14px;height:14px;background:#6aaca0"></div>
<div class="a" style="left:1138px;top:554px;width:14px;height:14px;background:#d0e0e0"></div>
<div class="a" style="left:1153px;top:554px;width:14px;height:14px;background:#4a8888"></div>
<div class="a" style="left:1168px;top:554px;width:14px;height:14px;background:#64b8a8"></div>
<div class="a" style="left:943px;top:569px;width:14px;height:14px;background:#526478"></div>
<div class="a" style="left:958px;top:569px;width:14px;height:14px;background:#2a4058"></div>
<div class="a" style="left:973px;top:569px;width:14px;height:14px;background:#5cb4a0"></div>
<div class="a" style="left:988px;top:569px;width:14px;height:14px;background:#182e48"></div>
<div class="a" style="left:1003px;top:569px;width:14px;height:14px;background:#586c7c"></div>
<div class="a" style="left:1018px;top:569px;width:14px;height:14px;background:#8cbcb8"></div>
<div class="a" style="left:1033px;top:569px;width:14px;height:14px;background:#347c78"></div>
<div class="a" style="left:1048px;top:569px;width:14px;height:14px;background:#182c44"></div>
<div class="a" style="left:1063px;top:569px;width:14px;height:14px;background:#587484"></div>
<div class="a" style="left:1078px;top:569px;width:14px;height:14px;background:#4a5468"></div>
<div class="a" style="left:1093px;top:569px;width:14px;height:14px;background:#cce4e0"></div>
<div class="a" style="left:1108px;top:569px;width:14px;height:14px;background:#6e7484"></div>
<div class="a" style="left:1123px;top:569px;width:14px;height:14px;background:#285c68"></div>
<div class="a" style="left:1138px;top:569px;width:14px;height:14px;background:#f2f4f6"></div>
<div class="a" style="left:1153px;top:569px;width:14px;height:14px;background:#e8ecee"></div>
<div class="a" style="left:1168px;top:569px;width:14px;height:14px;background:#344c64"></div>
<div class="a" style="left:943px;top:584px;width:14px;height:14px;background:#eeeff2"></div>
<div class="a" style="left:958px;top:584px;width:14px;height:14px;background:#5aaa98"></div>
<div class="a" style="left:973px;top:584px;width:14px;height:14px;background:#8ee0cc"></div>
<div class="a" style="left:988px;top:584px;width:14px;height:14px;background:#6c9c9c"></div>
<div class="a" style="left:1003px;top:584px;width:14px;height:14px;background:#74bcac"></div>
<div class="a" style="left:1018px;top:584px;width:14px;height:14px;background:#223c54"></div>
<div class="a" style="left:1033px;top:584px;width:14px;height:14px;background:#6cd8c0"></div>
<div class="a" style="left:1048px;top:584px;width:14px;height:14px;background:#8a96a4"></div>
<div class="a" style="left:1063px;top:584px;width:14px;height:14px;background:#b0cccc"></div>
<div class="a" style="left:1078px;top:584px;width:14px;height:14px;background:#dcf0ec"></div>
<div class="a" style="left:1093px;top:584px;width:14px;height:14px;background:#1a3044"></div>
<div class="a" style="left:1108px;top:584px;width:14px;height:14px;background:#b4bcc4"></div>
<div class="a" style="left:1123px;top:584px;width:14px;height:14px;background:#c0e0d8"></div>
<div class="a" style="left:1138px;top:584px;width:14px;height:14px;background:#d8ecea"></div>
<div class="a" style="left:1153px;top:584px;width:14px;height:14px;background:#7a8a98"></div>
<div class="a" style="left:1168px;top:584px;width:14px;height:14px;background:#4a7c80"></div>
<div class="a" style="left:943px;top:599px;width:14px;height:14px;background:#0e1e3c"></div>
<div class="a" style="left:958px;top:599px;width:14px;height:14px;background:#11223e"></div>
<div class="a" style="left:973px;top:599px;width:14px;height:14px;background:#5c7084"></div>
<div class="a" style="left:988px;top:599px;width:14px;height:14px;background:#b8bac4"></div>
<div class="a" style="left:1003px;top:599px;width:14px;height:14px;background:#626478"></div>
<div class="a" style="left:1018px;top:599px;width:14px;height:14px;background:#2c6468"></div>
<div class="a" style="left:1033px;top:599px;width:14px;height:14px;background:#444a64"></div>
<div class="a" style="left:1048px;top:599px;width:14px;height:14px;background:#1a3044"></div>
<div class="a" style="left:1063px;top:599px;width:14px;height:14px;background:#6c8090"></div>
<div class="a" style="left:1078px;top:599px;width:14px;height:14px;background:#1a3448"></div>
<div class="a" style="left:1093px;top:599px;width:14px;height:14px;background:#70a0a0"></div>
<div class="a" style="left:1108px;top:599px;width:14px;height:14px;background:#444c64"></div>
<div class="a" style="left:1123px;top:599px;width:14px;height:14px;background:#f8fafa"></div>
<div class="a" style="left:1138px;top:599px;width:14px;height:14px;background:#608c90"></div>
<div class="a" style="left:1153px;top:599px;width:14px;height:14px;background:#acd8cc"></div>
<div class="a" style="left:1168px;top:599px;width:14px;height:14px;background:#64a49c"></div>
<div class="a" style="left:943px;top:614px;width:14px;height:14px;background:#368c80"></div>
<div class="a" style="left:958px;top:614px;width:14px;height:14px;background:#5a6c7c"></div>
<div class="a" style="left:973px;top:614px;width:14px;height:14px;background:#3c4058"></div>
<div class="a" style="left:988px;top:614px;width:14px;height:14px;background:#a8e8dc"></div>
<div class="a" style="left:1003px;top:614px;width:14px;height:14px;background:#1c3048"></div>
<div class="a" style="left:1018px;top:614px;width:14px;height:14px;background:#8894a0"></div>
<div class="a" style="left:1033px;top:614px;width:14px;height:14px;background:#283c54"></div>
<div class="a" style="left:1048px;top:614px;width:14px;height:14px;background:#4c8c88"></div>
<div class="a" style="left:1063px;top:614px;width:14px;height:14px;background:#1e3a50"></div>
<div class="a" style="left:1078px;top:614px;width:14px;height:14px;background:#1e4a58"></div>
<div class="a" style="left:1093px;top:614px;width:14px;height:14px;background:#526074"></div>
<div class="a" style="left:1108px;top:614px;width:14px;height:14px;background:#5c6478"></div>
<div class="a" style="left:1123px;top:614px;width:14px;height:14px;background:#7a7e8e"></div>
<div class="a" style="left:1138px;top:614px;width:14px;height:14px;background:#4c5068"></div>
<div class="a" style="left:1153px;top:614px;width:14px;height:14px;background:#202844"></div>
<div class="a" style="left:1168px;top:614px;width:14px;height:14px;background:#2a4458"></div>
<div class="a" style="left:943px;top:629px;width:14px;height:14px;background:#224e5c"></div>
<div class="a" style="left:958px;top:629px;width:14px;height:14px;background:#327070"></div>
<div class="a" style="left:973px;top:629px;width:14px;height:14px;background:#467c7e"></div>
<div class="a" style="left:988px;top:629px;width:14px;height:14px;background:#1a3448"></div>
<div class="a" style="left:1003px;top:629px;width:14px;height:14px;background:#748494"></div>
<div class="a" style="left:1018px;top:629px;width:14px;height:14px;background:#142840"></div>
<div class="a" style="left:1033px;top:629px;width:14px;height:14px;background:#b0c4c8"></div>
<div class="a" style="left:1048px;top:629px;width:14px;height:14px;background:#387474"></div>
<div class="a" style="left:1063px;top:629px;width:14px;height:14px;background:#d4d4d8"></div>
<div class="a" style="left:1078px;top:629px;width:14px;height:14px;background:#48a090"></div>
<div class="a" style="left:1093px;top:629px;width:14px;height:14px;background:#1a2038"></div>
<div class="a" style="left:1108px;top:629px;width:14px;height:14px;background:#505870"></div>
<div class="a" style="left:1123px;top:629px;width:14px;height:14px;background:#4cac98"></div>
<div class="a" style="left:1138px;top:629px;width:14px;height:14px;background:#287470"></div>
<div class="a" style="left:1153px;top:629px;width:14px;height:14px;background:#7c98a0"></div>
<div class="a" style="left:1168px;top:629px;width:14px;height:14px;background:#dcf4ee"></div>
<div class="a" style="left:943px;top:644px;width:14px;height:14px;background:#646a80"></div>
<div class="a" style="left:958px;top:644px;width:14px;height:14px;background:#4a8084"></div>
<div class="a" style="left:973px;top:644px;width:14px;height:14px;background:#c0d8dc"></div>
<div class="a" style="left:988px;top:644px;width:14px;height:14px;background:#3e4c64"></div>
<div class="a" style="left:1003px;top:644px;width:14px;height:14px;background:#a4a6b4"></div>
<div class="a" style="left:1018px;top:644px;width:14px;height:14px;background:#b4bac4"></div>
<div class="a" style="left:1033px;top:644px;width:14px;height:14px;background:#c4e0dc"></div>
<div class="a" style="left:1048px;top:644px;width:14px;height:14px;background:#3c5068"></div>
<div class="a" style="left:1063px;top:644px;width:14px;height:14px;background:#1e2644"></div>
<div class="a" style="left:1078px;top:644px;width:14px;height:14px;background:#40a490"></div>
<div class="a" style="left:1093px;top:644px;width:14px;height:14px;background:#225c64"></div>
<div class="a" style="left:1108px;top:644px;width:14px;height:14px;background:#bcc8cc"></div>
<div class="a" style="left:1123px;top:644px;width:14px;height:14px;background:#3a8c84"></div>
<div class="a" style="left:1138px;top:644px;width:14px;height:14px;background:#b0d4d0"></div>
<div class="a" style="left:1153px;top:644px;width:14px;height:14px;background:#348c80"></div>
<div class="a" style="left:1168px;top:644px;width:14px;height:14px;background:#244e5c"></div>
<div class="a" style="left:943px;top:659px;width:14px;height:14px;background:#1a3048"></div>
<div class="a" style="left:958px;top:659px;width:14px;height:14px;background:#183c48"></div>
<div class="a" style="left:973px;top:659px;width:14px;height:14px;background:#48b098"></div>
<div class="a" style="left:988px;top:659px;width:14px;height:14px;background:#287074"></div>
<div class="a" style="left:1003px;top:659px;width:14px;height:14px;background:#4c948c"></div>
<div class="a" style="left:1018px;top:659px;width:14px;height:14px;background:#d8e4e2"></div>
<div class="a" style="left:1033px;top:659px;width:14px;height:14px;background:#4e6478"></div>
<div class="a" style="left:1048px;top:659px;width:14px;height:14px;background:#1a3448"></div>
<div class="a" style="left:1063px;top:659px;width:14px;height:14px;background:#225c68"></div>
<div class="a" style="left:1078px;top:659px;width:14px;height:14px;background:#286c6c"></div>
<div class="a" style="left:1093px;top:659px;width:14px;height:14px;background:#48ac98"></div>
<div class="a" style="left:1108px;top:659px;width:14px;height:14px;background:#224858"></div>
<div class="a" style="left:1123px;top:659px;width:14px;height:14px;background:#74a8a4"></div>
<div class="a" style="left:1138px;top:659px;width:14px;height:14px;background:#121e3a"></div>
<div class="a" style="left:1153px;top:659px;width:14px;height:14px;background:#5a6478"></div>
<div class="a" style="left:1168px;top:659px;width:14px;height:14px;background:#38c4a4"></div>
<div class="a" style="left:943px;top:674px;width:14px;height:14px;background:#98b0b4"></div>
<div class="a" style="left:958px;top:674px;width:14px;height:14px;background:#348c80"></div>
<div class="a" style="left:973px;top:674px;width:14px;height:14px;background:#40a090"></div>
<div class="a" style="left:988px;top:674px;width:14px;height:14px;background:#2c646c"></div>
<div class="a" style="left:1003px;top:674px;width:14px;height:14px;background:#2c5c6c"></div>
<div class="a" style="left:1018px;top:674px;width:14px;height:14px;background:#2a7474"></div>
<div class="a" style="left:1033px;top:674px;width:14px;height:14px;background:#3c8c84"></div>
<div class="a" style="left:1048px;top:674px;width:14px;height:14px;background:#6c7084"></div>
<div class="a" style="left:1063px;top:674px;width:14px;height:14px;background:#224458"></div>
<div class="a" style="left:1078px;top:674px;width:14px;height:14px;background:#f4f6f8"></div>
<div class="a" style="left:1093px;top:674px;width:14px;height:14px;background:#30a090"></div>
<div class="a" style="left:1108px;top:674px;width:14px;height:14px;background:#3c646c"></div>
<div class="a" style="left:1123px;top:674px;width:14px;height:14px;background:#0e1834"></div>
<div class="a" style="left:1138px;top:674px;width:14px;height:14px;background:#2a7070"></div>
<div class="a" style="left:1153px;top:674px;width:14px;height:14px;background:#b8bcc4"></div>
<div class="a" style="left:1168px;top:674px;width:14px;height:14px;background:#5c8084"></div>
<div class="a" style="left:943px;top:689px;width:14px;height:14px;background:#22606a"></div>
<div class="a" style="left:958px;top:689px;width:14px;height:14px;background:#2c5060"></div>
<div class="a" style="left:973px;top:689px;width:14px;height:14px;background:#142e44"></div>
<div class="a" style="left:988px;top:689px;width:14px;height:14px;background:#98a4ac"></div>
<div class="a" style="left:1003px;top:689px;width:14px;height:14px;background:#f2f8f8"></div>
<div class="a" style="left:1018px;top:689px;width:14px;height:14px;background:#c0d4d6"></div>
<div class="a" style="left:1033px;top:689px;width:14px;height:14px;background:#e6eef0"></div>
<div class="a" style="left:1048px;top:689px;width:14px;height:14px;background:#4eaa98"></div>
<div class="a" style="left:1063px;top:689px;width:14px;height:14px;background:#2a646c"></div>
<div class="a" style="left:1078px;top:689px;width:14px;height:14px;background:#264458"></div>
<div class="a" style="left:1093px;top:689px;width:14px;height:14px;background:#44b498"></div>
<div class="a" style="left:1108px;top:689px;width:14px;height:14px;background:#7a9498"></div>
<div class="a" style="left:1123px;top:689px;width:14px;height:14px;background:#b8bcc8"></div>
<div class="a" style="left:1138px;top:689px;width:14px;height:14px;background:#dde4e6"></div>
<div class="a" style="left:1153px;top:689px;width:14px;height:14px;background:#ffffff"></div>
<div class="a" style="left:1168px;top:689px;width:14px;height:14px;background:#ffffff"></div>
<svg style="left:1156px;top:692px" width="9" height="9"><path d="M5 1.5L8 4.5L5 7.5L2 4.5Z" fill="none" stroke="#000" stroke-width="1.3"/></svg>
<div class="a" style="left:1168px;top:689px;width:14px;height:14px;background:linear-gradient(45deg,#ccc 25%,transparent 25%,transparent 75%,#ccc 75%),linear-gradient(45deg,#ccc 25%,#fff 25%,#fff 75%,#ccc 75%);background-size:9px 9px;background-position:0 0,4.5px 4.5px"></div>
</div>
<div class="t" style="left:952px;top:712px;font-size:12.5px;color:#8a8a8a">256</div>
<svg style="left:996px;top:710px" width="16" height="16"><rect x="0.5" y="0.5" width="14" height="14" fill="#6a6a6a" stroke="#858585" stroke-width="1"/><path d="M1 1h4.3v4.3H1zM9.7 1H14v4.3H9.7zM5.3 5.3h4.4v4.4H5.3zM1 9.7h4.3V14H1zM9.7 9.7H14V14H9.7z" fill="#3e3e3e"/></svg>
<svg style="left:1030px;top:710px" width="16" height="16"><path d="M8 1L15 4.5V11.5L8 15L1 11.5V4.5Z" fill="#6e6e6e" stroke="#8a8a8a" stroke-width="1"/><path d="M1 4.5L8 8L15 4.5M8 8V15" fill="none" stroke="#8a8a8a" stroke-width="1"/></svg>
<svg style="left:1066px;top:709px" width="14" height="17"><path d="M3 7V5C3 2 5 1 7 1C9 1 11 2 11 5V7" fill="none" stroke="#8a8a8a" stroke-width="1.5"/><rect x="1" y="7" width="12" height="9" fill="none" stroke="#8a8a8a" stroke-width="1.5"/><rect x="6" y="10" width="2" height="3" fill="#8a8a8a"/></svg>
<svg style="left:1123px;top:711px" width="16" height="16"><path d="M0.8 0.8H13.2V13.2H5L0.8 9Z" fill="none" stroke="#858585" stroke-width="1.2"/><path d="M1 9H5V13" fill="none" stroke="#858585" stroke-width="1.2"/></svg>
<svg style="left:1158px;top:709px" width="14" height="17"><path d="M1 3H13M5 3V1H9V3" fill="none" stroke="#8a8a8a" stroke-width="1.2"/><path d="M2.5 4V16H11.5V4M5.5 6V14M8.5 6V14" fill="none" stroke="#8a8a8a" stroke-width="1.2"/></svg>
<div class="a" style="left:858px;top:748px;width:16px;height:1px;background:#3c3c3c"></div>
<div class="t" style="left:877px;top:743px;font-size:12.7px;color:#9a9a9a">Image Size</div>
<div class="a" style="left:956px;top:748px;width:312px;height:1px;background:#3c3c3c"></div>
<div class="a" style="left:858px;top:748px;width:1px;height:79px;background:#3c3c3c"></div>
<div class="a" style="left:1267px;top:748px;width:1px;height:79px;background:#3c3c3c"></div>
<div class="a" style="left:858px;top:827px;width:410px;height:1px;background:#3c3c3c"></div>
<div class="t" style="left:866px;top:769px;font-size:12.7px;color:#8a8a8a">W:</div>
<div class="t" style="left:870px;top:799px;font-size:12.7px;color:#8a8a8a">H:</div>
<div class="dd" style="left:889px;top:764px;width:94px;height:24px;background:#4c4c4c"></div>
<div class="dd" style="left:889px;top:794px;width:94px;height:24px;background:#4c4c4c"></div>
<div class="t" style="left:894px;top:770px;font-size:12.7px;color:#747474">1920</div>
<div class="t" style="left:894px;top:800px;font-size:12.7px;color:#747474">982</div>
<div class="t" style="left:986px;top:769px;font-size:12.7px;color:#8a8a8a">px</div>
<div class="t" style="left:986px;top:799px;font-size:12.7px;color:#8a8a8a">px</div>
<svg style="left:1013px;top:777px" width="24" height="32"><path d="M1 1H8V31H1" fill="none" stroke="#8a8a8a" stroke-width="1.5"/><rect x="16.5" y="9" width="5" height="7" rx="2.5" fill="none" stroke="#8a8a8a" stroke-width="1.4"/><rect x="16.5" y="14" width="5" height="7" rx="2.5" fill="none" stroke="#8a8a8a" stroke-width="1.4"/></svg>
<div class="t" style="right:819px;top:769px;font-size:12.7px;color:#9a9a9a">Percent:</div>
<div class="dd" style="left:1108px;top:764px;width:121px;height:24px;background:#4c4c4c"></div>
<div class="t" style="left:1113px;top:770px;font-size:12.7px;color:#747474">100</div>
<div class="t" style="left:1232px;top:769px;font-size:12.7px;color:#9a9a9a">%</div>
<div class="t" style="right:830px;top:800px;font-size:12.7px;color:#9a9a9a">Quality:</div>
<div class="dd" style="left:1100px;top:795px;width:160px;height:23px"></div>
<div class="t" style="left:1105px;top:800px;font-size:12.7px;color:#a8a8a8">Bicubic</div>
<svg style="left:1244px;top:803.5px" width="10" height="6"><path d="M0.7 0.7L5 5L9.3 0.7" fill="none" stroke="#cfcfcf" stroke-width="1.3"/></svg>
<div class="a" style="left:858px;top:841px;width:16px;height:1px;background:#3c3c3c"></div>
<div class="t" style="left:877px;top:836px;font-size:12.7px;color:#9a9a9a">Animation</div>
<div class="a" style="left:948px;top:841px;width:320px;height:1px;background:#3c3c3c"></div>
<div class="a" style="left:858px;top:841px;width:1px;height:77px;background:#3c3c3c"></div>
<div class="a" style="left:1267px;top:841px;width:1px;height:77px;background:#3c3c3c"></div>
<div class="a" style="left:858px;top:918px;width:410px;height:1px;background:#3c3c3c"></div>
<div class="t" style="left:866px;top:861px;font-size:12.7px;color:#9a9a9a">Looping Options:</div>
<div class="dd" style="left:970px;top:855px;width:290px;height:23px"></div>
<div class="t" style="left:975px;top:860px;font-size:12.7px;color:#b0b0b0">Once</div>
<svg style="left:1244px;top:863.5px" width="10" height="6"><path d="M0.7 0.7L5 5L9.3 0.7" fill="none" stroke="#cfcfcf" stroke-width="1.3"/></svg>
<div class="a" style="left:867px;top:887px;width:393px;height:25px;border:1px solid #3c3c3c;background:#505050"></div>
<div class="t" style="left:937px;top:892px;font-size:12.7px;color:#8e8e8e">1 of 185</div>
<div class="a" style="left:1058px;top:889px;width:39px;height:20px;background:#4a4a4a;border:1px solid #3c3c3c;border-radius:2px"></div>
<div class="a" style="left:1098px;top:889px;width:39px;height:20px;background:#4a4a4a;border:1px solid #3c3c3c;border-radius:2px"></div>
<div class="a" style="left:1138px;top:889px;width:39px;height:20px;background:#4a4a4a;border:1px solid #3c3c3c;border-radius:2px"></div>
<div class="a" style="left:1178px;top:889px;width:39px;height:20px;background:#4a4a4a;border:1px solid #3c3c3c;border-radius:2px"></div>
<div class="a" style="left:1218px;top:889px;width:39px;height:20px;background:#4a4a4a;border:1px solid #3c3c3c;border-radius:2px"></div>
<svg style="left:1069px;top:894px" width="17" height="10"><path d="M2 5L8 1V9Z M9 5L15 1V9Z" fill="#b8b8b8"/></svg>
<svg style="left:1109px;top:894px" width="17" height="10"><path d="M1 5L7 1V9Z M9 1h2v8h-2z" fill="#b8b8b8"/></svg>
<svg style="left:1149px;top:894px" width="17" height="10"><path d="M5 0.5L12 5L5 9.5Z" fill="#b8b8b8"/></svg>
<svg style="left:1189px;top:894px" width="17" height="10"><path d="M4 1h2v8h-2z M8 1L14 5L8 9Z" fill="#b8b8b8"/></svg>
<svg style="left:1229px;top:894px" width="17" height="10"><path d="M2 1L8 5L2 9Z M9 1L15 5L9 9Z" fill="#b8b8b8"/></svg>
</div>

<!-- ================= ERROR DIALOG ================= -->
<div id="err">
<div class="a" style="left:720px;top:265px;width:478px;height:218px;background:#535353;border:1px solid #6a6a6a;box-shadow:0 0 14px 2px rgba(0,0,0,0.35)"></div>
<div class="a" style="left:721px;top:266px;width:476px;height:37px;background:#fff"></div>
<div class="t" style="left:730px;top:278px;font-size:14.8px;color:#000">Adobe Save for Web Error</div>
<svg style="left:752px;top:334px" width="42" height="42"><defs><linearGradient id="eg" x1="0.2" y1="0" x2="0.8" y2="1"><stop offset="0" stop-color="#e65a5a"/><stop offset="0.45" stop-color="#c41818"/><stop offset="0.75" stop-color="#a80808"/><stop offset="1" stop-color="#d81010"/></linearGradient><linearGradient id="xg" x1="0" y1="0" x2="1" y2="1"><stop offset="0" stop-color="#f4f4f4"/><stop offset="1" stop-color="#c8cccc"/></linearGradient></defs><circle cx="20.8" cy="21" r="18.2" fill="#222" opacity="0.25"/><circle cx="20.8" cy="21" r="17.8" fill="#f2f2f2"/><circle cx="20.8" cy="21" r="16.8" fill="url(#eg)"/><path d="M13.2 13.4L28.4 28.6M28.4 13.4L13.2 28.6" stroke="url(#xg)" stroke-width="5" stroke-linecap="square"/></svg>
<div class="t" style="left:832px;top:321px;font-size:13px;color:#e4e4e4">Could not complete this operation. An unknown error has</div>
<div class="t" style="left:832px;top:337px;font-size:13px;color:#e4e4e4">occurred.</div>
<div class="a" style="left:917px;top:436px;width:87px;height:31px;border:1.6px solid #3272d8;border-radius:16px"></div>
<div class="t" style="left:951px;top:445px;font-size:13px;color:#e8e8e8">OK</div>
</div>
<!-- ================= TASKBAR ================= -->
<div id="tb">
<div class="a" style="left:0;top:1030px;width:1920px;height:50px;background:linear-gradient(90deg,#36212a 0%,#33212a 15%,#312226 35%,#302325 55%,#2f2828 66%,#352628 78%,#3a282a 90%,#3d292c 100%)"></div>
<div class="a" style="left:1290px;top:1030px;width:80px;height:50px;background:linear-gradient(90deg,rgba(50,50,50,0) 0%,#333 50%,#333 100%)"></div>
<div class="a" style="left:1365px;top:1030px;width:5px;height:50px;background:#3a3a3a"></div>
<div class="a" style="left:1369px;top:1030px;width:57px;height:50px;background:#575757"></div>
<div class="a" style="left:1426px;top:1030px;width:40px;height:50px;background:linear-gradient(90deg,#333 0%,rgba(51,51,51,0) 100%)"></div>
<div class="a" style="left:5px;top:1030px;width:1px;height:50px;background:#8a6a70"></div>
<svg style="left:18px;top:1042px" width="38" height="36"><path d="M13 1.5H33V17.5H28V21L24 17.5H13Z" fill="#fff"/><path d="M16 5.5H30M16 9H30M16 12.5H26" stroke="#555" stroke-width="1.2"/><circle cx="13" cy="22" r="10" fill="#2a2a2a" stroke="#8a8a8a" stroke-width="1.2"/><text x="9.5" y="27.5" font-family="Liberation Sans" font-size="14" fill="#fff">1</text></svg>
<div class="t" style="left:95px;top:1037px;font-size:15px;color:#fff">23:33</div>
<div class="t" style="left:75px;top:1060px;font-size:15px;color:#fff">15/01/2022</div>
<div class="t" style="left:167px;top:1037px;font-size:15px;color:#fff">עבר</div>
<div class="t" style="left:171px;top:1060px;font-size:15px;color:#fff">HE</div>
<svg style="left:206px;top:1047px" width="26" height="18"><path d="M3 1V4.5M6 1V4.5M1.8 4.5H7.2V7C7.2 8.5 6 9.5 4.5 9.5S1.8 8.5 1.8 7Z M4.5 9.5V15" fill="none" stroke="#fff" stroke-width="1.1"/><rect x="5.5" y="3.5" width="17" height="11" fill="none" stroke="#fff" stroke-width="1.1"/><rect x="7" y="5" width="14" height="8" fill="#fff"/><rect x="22.5" y="7" width="1.5" height="4" fill="#fff"/></svg>
<svg style="left:239px;top:1045px" width="20" height="20"><path d="M2.5 17A13.5 13.5 0 0 1 16 3.5M6.5 17A9.5 9.5 0 0 1 16 7.5M10.5 17A5.5 5.5 0 0 1 16 11.5" fill="none" stroke="#fff" stroke-width="1.3"/><circle cx="15.5" cy="16.6" r="1.4" fill="#fff"/></svg>
<svg style="left:266px;top:1046px" width="24" height="22"><circle cx="8" cy="10" r="6" fill="#e8e8e8"/><circle cx="14" cy="7" r="6" fill="#9a9a9a"/><circle cx="8" cy="12" r="5" fill="#f0f0f0"/><circle cx="16.5" cy="13.5" r="6.2" fill="#e02020"/><path d="M14 11L19 16M19 11L14 16" stroke="#fff" stroke-width="1.6"/></svg>
<svg style="left:299px;top:1050px" width="18" height="10"><path d="M1 9L9 1L17 9" fill="none" stroke="#fff" stroke-width="1.3"/></svg>
<svg style="left:339px;top:1041px" width="28" height="28"><defs><linearGradient id="mg" x1="0" y1="0" x2="1" y2="1"><stop offset="0" stop-color="#ffe83a"/><stop offset="1" stop-color="#f0a000"/></linearGradient><mask id="mm"><rect width="28" height="28" fill="#fff"/><circle cx="8.5" cy="8" r="9" fill="#000"/></mask></defs><circle cx="14" cy="14" r="11.5" fill="url(#mg)" mask="url(#mm)"/><path d="M2 10C1 8 2 6 4 6C4.5 4 7 3.5 8.5 5C10 4.5 11.5 6 11 7.5C12 8.5 11 10 10 10Z" fill="#c8e4f8"/></svg>
<div class="t" style="left:378px;top:1047px;font-size:18px;color:#fff">25°C</div>
<div class="t" style="left:427px;top:1047px;font-size:18px;color:#fff;">בהיר ברוב היום</div>
<div class="a" style="left:1135px;top:1041px;width:26px;height:26px;background:#330000;border-radius:4px;box-shadow:0 1px 2px rgba(0,0,0,.4)"></div>
<div class="t" style="left:1135px;top:1047px;width:26px;text-align:center;font-size:15px;font-weight:bold;color:#ff9a00;letter-spacing:-0.3px">Ai</div>
<div class="a" style="left:1197px;top:1041px;width:26px;height:26px;background:#00005b;border-radius:4px;box-shadow:0 1px 2px rgba(0,0,0,.4)"></div>
<div class="t" style="left:1197px;top:1047px;width:26px;text-align:center;font-size:15px;font-weight:bold;color:#9999ff;letter-spacing:-0.3px">Me</div>
<div class="a" style="left:1258px;top:1041px;width:27px;height:27px;background:#1f0040;border:2px solid #d291ff;box-shadow:0 1px 2px rgba(0,0,0,.4)"></div>
<div class="t" style="left:1258px;top:1047px;width:27px;text-align:center;font-size:16px;color:#d291ff;letter-spacing:0px">Ae</div>
<svg style="left:1319px;top:1040px" width="29" height="29"><path d="M14.5 14.5L2.38 7.5A14 14 0 0 1 26.62 7.5Z" fill="#db4437"/><path d="M14.5 14.5L26.62 7.5A14 14 0 0 1 14.5 28.5Z" fill="#fcc934"/><path d="M14.5 14.5L14.5 28.5A14 14 0 0 1 2.38 7.5Z" fill="#1e9e50"/><circle cx="14.5" cy="14.5" r="6.5" fill="#fff"/><circle cx="14.5" cy="14.5" r="5" fill="#4a8af4"/></svg>
<div class="a" style="left:1382px;top:1041px;width:27px;height:27px;background:#001d26;border:2px solid #00c8ff;box-shadow:0 1px 2px rgba(0,0,0,.4)"></div>
<div class="t" style="left:1382px;top:1047px;width:27px;text-align:center;font-size:16px;color:#00c8ff;letter-spacing:0px">Ps</div>
<div class="a" style="left:1444px;top:1041px;width:28px;height:28px;background:#2b0014;border:2px solid #ff3f94;box-shadow:0 1px 2px rgba(0,0,0,.4)"></div>
<div class="t" style="left:1444px;top:1047px;width:28px;text-align:center;font-size:16px;color:#ff3f94;letter-spacing:0px">Id</div>
<svg style="left:1505px;top:1042px" width="29" height="25"><path d="M1 2H11L13 4H27V22H1Z" fill="#e8a400"/><rect x="1" y="5" width="27" height="17" fill="#ffd35b"/><path d="M7 24V14H22V24H18V18H11V24Z" fill="#2a8ad8"/></svg>
<svg style="left:1571px;top:1043px" width="22" height="23"><path d="M11 1L21 4.5V11C21 17 16 21 11 22.5C6 21 1 17 1 11V4.5Z" fill="#fff"/><path d="M11 1V22.5M1 10.5H21" stroke="#3a2a2c" stroke-width="1.5"/></svg>
<div class="a" style="left:1630px;top:1040px;width:28px;height:28px;background:#261300;border:2px solid #ff7c00;box-shadow:0 1px 2px rgba(0,0,0,.4)"></div>
<div class="t" style="left:1630px;top:1046px;width:28px;text-align:center;font-size:16px;color:#ff7c00;letter-spacing:0px">Ai</div>
<svg style="left:1691px;top:1042px" width="26" height="27"><rect x="1" y="1" width="22" height="24" fill="#6aaee0"/><path d="M23 1L25 3V26L23 25Z" fill="#3a7ab0"/><circle cx="12" cy="12.5" r="8" fill="#f07a20" stroke="#fff" stroke-width="1"/><path d="M9.5 8L16.5 12.5L9.5 17Z" fill="#fff"/></svg>
<svg style="left:1760px;top:1045px" width="22" height="20"><path d="M1 0V19" stroke="#fff" stroke-width="1.2"/><rect x="-0.5" y="6" width="3" height="3" fill="#fff"/><path d="M5 1H20M5 18H20M5 5.5H20V13.5H5Z" fill="none" stroke="#fff" stroke-width="1.2"/><path d="M5 0V3M20 0V3M5 16V19M20 16V19" stroke="#fff" stroke-width="1.2"/></svg>
<svg style="left:1819px;top:1044px" width="22" height="22"><circle cx="13" cy="8.5" r="7" fill="none" stroke="#fff" stroke-width="1.3"/><path d="M8 13.5L1 20.5" stroke="#fff" stroke-width="1.4"/></svg>
<svg style="left:1879px;top:1045px" width="22" height="21"><path d="M0 3L9 1.8V9.7H0Z M10 1.6L21 0V9.7H10Z M0 10.8H9V18.7L0 17.5Z M10 10.8H21V20.5L10 18.9Z" fill="#fff"/></svg>
<div class="a" style="left:1122px;top:1077px;width:51px;height:3px;background:#78bcee"></div>
<div class="a" style="left:1184px;top:1077px;width:51px;height:3px;background:#78bcee"></div>
<div class="a" style="left:1246px;top:1077px;width:51px;height:3px;background:#78bcee"></div>
<div class="a" style="left:1308px;top:1077px;width:51px;height:3px;background:#78bcee"></div>
<div class="a" style="left:1369px;top:1077px;width:57px;height:3px;background:#78bcee"></div>
<div class="a" style="left:1498px;top:1077px;width:47px;height:3px;background:#78bcee"></div>
<div class="a" style="left:1618px;top:1077px;width:51px;height:3px;background:#78bcee"></div>
<div class="a" style="left:1365px;top:1077px;width:4px;height:3px;background:#4a7aa0"></div>
<div class="a" style="left:1494px;top:1077px;width:4px;height:3px;background:#4a6a88"></div>
</div>
</body></html>
